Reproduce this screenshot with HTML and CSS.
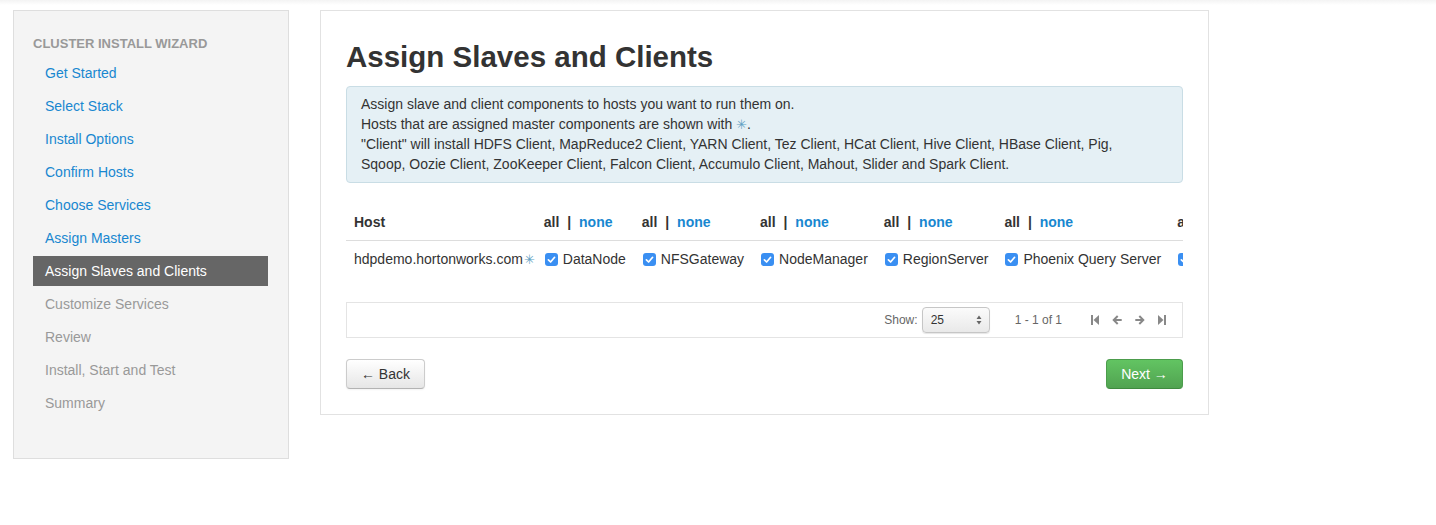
FILE: index.html
```html
<!DOCTYPE html>
<html>
<head>
<meta charset="utf-8">
<link rel="stylesheet" href="styles.css">
</head>
<body>
<div class="topbar"></div>
<div class="page">
  <aside class="sidebar">
    <div class="sidebar-title">Cluster Install Wizard</div>
    <ul class="steps">
      <li class="step done">Get Started</li>
      <li class="step done">Select Stack</li>
      <li class="step done">Install Options</li>
      <li class="step done">Confirm Hosts</li>
      <li class="step done">Choose Services</li>
      <li class="step done">Assign Masters</li>
      <li class="step active">Assign Slaves and Clients</li>
      <li class="step todo">Customize Services</li>
      <li class="step todo">Review</li>
      <li class="step todo">Install, Start and Test</li>
      <li class="step todo">Summary</li>
    </ul>
  </aside>
  <main class="panel">
    <h2 class="title">Assign Slaves and Clients</h2>
    <div class="alert">
      Assign slave and client components to hosts you want to run them on.<br>
      Hosts that are assigned master components are shown with <span class="star">✳</span>.<br>
      "Client" will install HDFS Client, MapReduce2 Client, YARN Client, Tez Client, HCat Client, Hive Client, HBase Client, Pig, Sqoop, Oozie Client, ZooKeeper Client, Falcon Client, Accumulo Client, Mahout, Slider and Spark Client.
    </div>
    <div class="table-wrap">
      <table class="hosts">
        <thead>
          <tr>
            <th class="host-col">Host</th>
            <th><span class="all">all</span> <span class="sep">|</span> <span class="none">none</span></th>
            <th><span class="all">all</span> <span class="sep">|</span> <span class="none">none</span></th>
            <th><span class="all">all</span> <span class="sep">|</span> <span class="none">none</span></th>
            <th><span class="all">all</span> <span class="sep">|</span> <span class="none">none</span></th>
            <th><span class="all">all</span> <span class="sep">|</span> <span class="none">none</span></th>
            <th><span class="all">all</span> <span class="sep">|</span> <span class="none">none</span></th>
          </tr>
        </thead>
        <tbody>
          <tr>
            <td class="host-col">hdpdemo.hortonworks.com<span class="star host-star">✳</span></td>
            <td><span class="cb"><svg width="13" height="13" viewBox="0 0 13 13"><rect x="0" y="0" width="13" height="13" rx="3" fill="#3a8ff2"/><path d="M3.4 6.9 L5.6 9 L9.6 4.3" fill="none" stroke="#fff" stroke-width="1.7" stroke-linecap="round" stroke-linejoin="round"/></svg></span>DataNode</td>
            <td><span class="cb"><svg width="13" height="13" viewBox="0 0 13 13"><rect x="0" y="0" width="13" height="13" rx="3" fill="#3a8ff2"/><path d="M3.4 6.9 L5.6 9 L9.6 4.3" fill="none" stroke="#fff" stroke-width="1.7" stroke-linecap="round" stroke-linejoin="round"/></svg></span>NFSGateway</td>
            <td><span class="cb"><svg width="13" height="13" viewBox="0 0 13 13"><rect x="0" y="0" width="13" height="13" rx="3" fill="#3a8ff2"/><path d="M3.4 6.9 L5.6 9 L9.6 4.3" fill="none" stroke="#fff" stroke-width="1.7" stroke-linecap="round" stroke-linejoin="round"/></svg></span>NodeManager</td>
            <td><span class="cb"><svg width="13" height="13" viewBox="0 0 13 13"><rect x="0" y="0" width="13" height="13" rx="3" fill="#3a8ff2"/><path d="M3.4 6.9 L5.6 9 L9.6 4.3" fill="none" stroke="#fff" stroke-width="1.7" stroke-linecap="round" stroke-linejoin="round"/></svg></span>RegionServer</td>
            <td><span class="cb"><svg width="13" height="13" viewBox="0 0 13 13"><rect x="0" y="0" width="13" height="13" rx="3" fill="#3a8ff2"/><path d="M3.4 6.9 L5.6 9 L9.6 4.3" fill="none" stroke="#fff" stroke-width="1.7" stroke-linecap="round" stroke-linejoin="round"/></svg></span>Phoenix Query Server</td>
            <td><span class="cb"><svg width="13" height="13" viewBox="0 0 13 13"><rect x="0" y="0" width="13" height="13" rx="3" fill="#3a8ff2"/><path d="M3.4 6.9 L5.6 9 L9.6 4.3" fill="none" stroke="#fff" stroke-width="1.7" stroke-linecap="round" stroke-linejoin="round"/></svg></span>Client</td>
          </tr>
        </tbody>
      </table>
    </div>
    <div class="pager">
      <span class="show-label">Show:</span>
      <span class="select"><span>25</span><svg width="6" height="10" viewBox="0 0 6 10"><path d="M3 0.5 L5.5 4 L0.5 4 Z M3 9.5 L5.5 6 L0.5 6 Z" fill="#666"/></svg></span>
      <span class="range">1 - 1 of 1</span>
      <span class="nav-icons">
        <svg width="8" height="10" viewBox="0 0 8 10"><rect x="0" y="0" width="2" height="10" fill="#888"/><path d="M8 0 L2.5 5 L8 10 Z" fill="#888"/></svg>
        <svg width="10" height="10" viewBox="0 0 10 10"><path d="M5 0.3 L0.3 5 L5 9.7 L6.4 8.3 L4.1 6 L9.7 6 L9.7 4 L4.1 4 L6.4 1.7 Z" fill="#888"/></svg>
        <svg width="10" height="10" viewBox="0 0 10 10"><path d="M5 0.3 L9.7 5 L5 9.7 L3.6 8.3 L5.9 6 L0.3 6 L0.3 4 L5.9 4 L3.6 1.7 Z" fill="#888"/></svg>
        <svg width="8" height="10" viewBox="0 0 8 10"><path d="M0 0 L5.5 5 L0 10 Z" fill="#888"/><rect x="6" y="0" width="2" height="10" fill="#888"/></svg>
      </span>
    </div>
    <div class="actions">
      <button class="btn btn-back">← Back</button>
      <button class="btn btn-next">Next →</button>
    </div>
  </main>
</div>
</body>
</html>
```

FILE: styles.css
```css
* { box-sizing: border-box; }
html, body { margin: 0; padding: 0; background: #fff; }
body {
  font-family: "Liberation Sans", Arial, sans-serif;
  font-size: 14px;
  line-height: 20px;
  color: #333;
}
.topbar {
  height: 5px;
  background: linear-gradient(#f3f3f3, #ffffff);
}
.page {
  display: flex;
  align-items: flex-start;
  gap: 31px;
  padding: 5px 0 0 13px;
}
.sidebar {
  width: 276px;
  background: #f4f4f4;
  border: 1px solid #dedede;
  padding: 23px 20px 40px 19px;
}
.sidebar-title {
  font-size: 13px;
  font-weight: bold;
  text-transform: uppercase;
  color: #999;
  line-height: 20px;
  margin-bottom: 4px;
}
.steps { list-style: none; margin: 0; padding: 0; }
.step {
  height: 30px;
  line-height: 30px;
  padding-left: 12px;
  margin-bottom: 3px;
  font-size: 14px;
}
.step:last-child { margin-bottom: 0; }
.step.done { color: #1887d0; }
.step.active { background: #666; color: #fff; }
.step.todo { color: #999; }

.panel {
  width: 889px;
  border: 1px solid #e2e2e2;
  padding: 26px 25px 25px 25px;
}
.title {
  margin: 0;
  font-size: 29.5px;
  line-height: 40px;
  font-weight: bold;
  color: #333;
}
.alert {
  margin-top: 9px;
  margin-bottom: 20px;
  background: #e5f0f5;
  border: 1px solid #c9dde5;
  border-radius: 4px;
  padding: 7px 35px 8px 14px;
  line-height: 20px;
  color: #333;
}
.star {
  color: #5f9fc2;
  font-family: "DejaVu Sans", sans-serif;
  font-size: 13px;
  line-height: 0;
}
.host-star {
  margin-left: 1px;
  margin-right: -7px;
}
.table-wrap {
  overflow: hidden;
  width: 100%;
  margin-bottom: 25px;
}
.hosts {
  border-collapse: collapse;
  white-space: nowrap;
}
.hosts th, .hosts td {
  padding: 8px;
  height: 36px;
  text-align: left;
  line-height: 20px;
  vertical-align: middle;
}
.hosts th {
  height: 37px;
  padding-top: 9px;
  padding-bottom: 8px;
  font-weight: bold;
  border-bottom: 1px solid #dddddd;
}
.hosts .all { color: #333; }
.hosts .sep { color: #333; font-weight: bold; margin: 0 4px; }
.hosts .none { color: #1887d0; }
.cb {
  display: inline-block;
  width: 13px;
  height: 13px;
  line-height: 0;
  vertical-align: -2px;
  margin-left: 1px;
  margin-right: 5px;
}
.cb svg { display: block; }

.pager {
  border: 1px solid #e4e4e4;
  height: 36px;
  display: flex;
  align-items: center;
  justify-content: flex-end;
  padding-right: 16px;
  font-size: 12px;
  color: #666;
}
.show-label { margin-right: 4px; }
.select {
  width: 68px;
  height: 26px;
  border: 1px solid #c6c6c6;
  border-radius: 4px;
  background: linear-gradient(#fbfbfb, #e9e9e9);
  box-shadow: 0 1px 1px rgba(0,0,0,0.1);
  display: flex;
  align-items: center;
  justify-content: space-between;
  padding: 0 7px 0 8px;
  color: #333;
  font-size: 12px;
}
.range { margin-left: 25px; margin-right: 29px; }
.nav-icons {
  display: flex;
  align-items: center;
  gap: 13px;
}
.nav-icons svg { display: block; }

.actions {
  margin-top: 21px;
  display: flex;
  justify-content: space-between;
}
.btn {
  font-family: "Liberation Sans", Arial, sans-serif;
  font-size: 14px;
  line-height: 20px;
  height: 30px;
  padding: 4px 12px;
  border-radius: 4px;
  cursor: pointer;
}
.btn-back {
  width: 79px;
  color: #333;
  background: linear-gradient(#ffffff, #e6e6e6);
  border: 1px solid #cccccc;
  border-bottom-color: #b3b3b3;
  box-shadow: inset 0 1px 0 rgba(255,255,255,.2), 0 1px 2px rgba(0,0,0,.05);
}
.btn-next {
  width: 77px;
  color: #fff;
  background: linear-gradient(#62c462, #51a351);
  border: 1px solid #4c9c4c;
  border-bottom-color: #3f8a3f;
}
```
